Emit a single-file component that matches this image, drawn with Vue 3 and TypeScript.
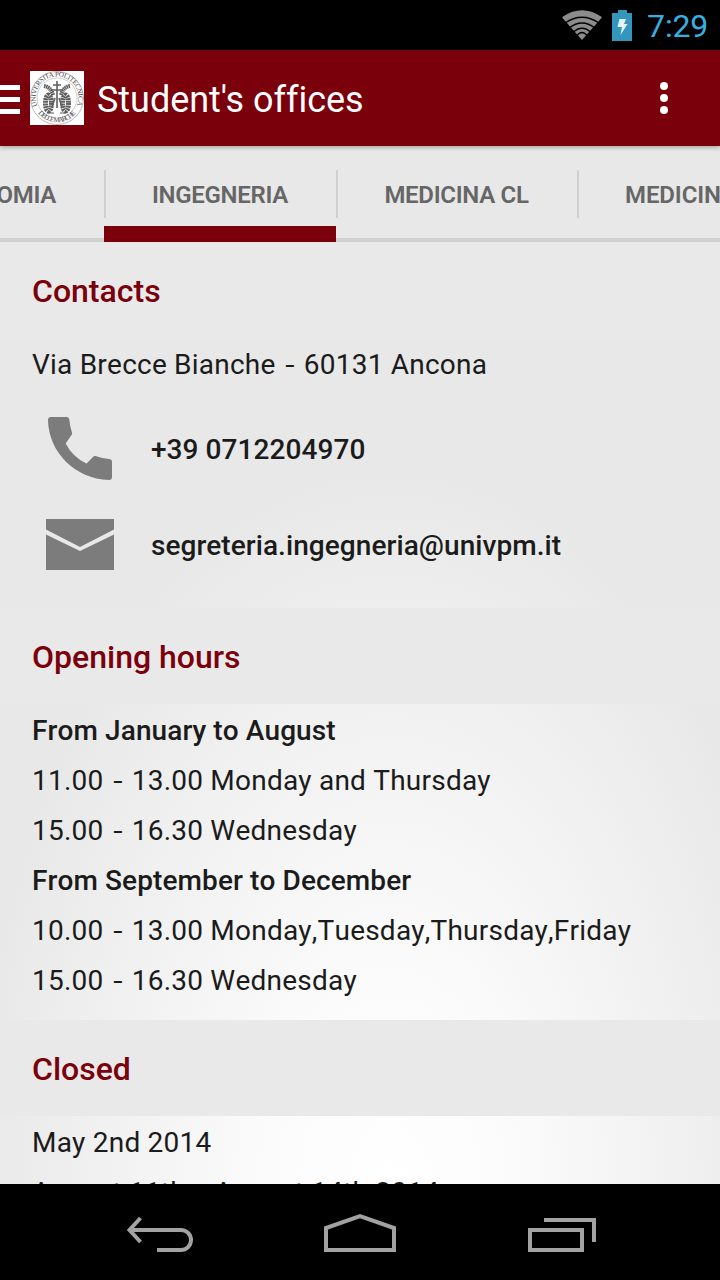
<script setup lang="ts">
interface Line {
  text: string;
  strong?: boolean;
}

const tabs = [
  { label: "ECONOMIA", key: "economia" },
  { label: "INGEGNERIA", key: "ingegneria", active: true },
  { label: "MEDICINA CL", key: "medicina-cl" },
  { label: "MEDICINA", key: "medicina" },
];

const address = "Via Brecce Bianche - 60131 Ancona";

const hours: Line[] = [
  { text: "From January to August", strong: true },
  { text: "11.00 - 13.00 Monday and Thursday" },
  { text: "15.00 - 16.30 Wednesday" },
  { text: "From September to December", strong: true },
  { text: "10.00 - 13.00 Monday,Tuesday,Thursday,Friday" },
  { text: "15.00 - 16.30 Wednesday" },
];

const closed = ["May 2nd 2014", "August 11th - August 14th 2014"];

// Keeps the hyphen as its own piece so it can be spaced like a dash.
function pieces(text: string): string[] {
  return text.split(/(-)/);
}
</script>

<template>
  <div class="screen">
    <div class="status-bar">
      <svg class="wifi" viewBox="0 0 40 32" fill="#8c8c8c">
        <path d="M20 31L0.500 9Q0 8 1 7.500Q20 -5 39 7.500Q40 8 39.500 9Z" />
        <g fill="none" stroke="#000" stroke-width="1.500">
          <path d="M3 14Q20 2.500 37 14" />
          <path d="M7 19Q20 9 33 19" />
          <path d="M11 23.500Q20 15 29 23.500" />
          <path d="M14.500 27Q20 20 25.500 27" />
        </g>
      </svg>
      <svg class="battery" viewBox="0 0 20 31">
        <path fill="#3596bd" d="M6 0h9v3h5v28H0V3h6z" />
        <path fill="#e4f4fb" d="M7.500 9h6.500l-2 5h3.500l-7 11 1.500-8H5.500z" />
      </svg>
      <span class="clock">7:29</span>
    </div>

    <header class="app-bar">
      <span class="drawer"><i /><i /><i /></span>
      <svg class="seal" viewBox="0 0 54 54">
        <defs>
          <path id="seal-top" d="M7.400 35 A21.300 21.300 0 1 1 46.600 35" />
          <path id="seal-bottom" d="M7.500 41.500 A24.500 24.500 0 0 0 46.500 41.500" />
        </defs>
        <rect width="54" height="54" fill="#fff" />
        <g fill="none" stroke="#8a8a8a">
          <circle cx="27" cy="27" r="26.500" stroke-width="0.600" />
          <circle cx="27" cy="27" r="20" stroke-width="0.400" />
        </g>
        <g class="seal-text">
          <text><textPath href="#seal-top" textLength="83">UNIVERSITA POLITECNICA</textPath></text>
          <text><textPath href="#seal-bottom" startOffset="1" textLength="43">DELLE MARCHE</textPath></text>
        </g>
        <g fill="none" stroke="#606060">
          <path d="M14 15q7 1 9 9M40 15q-7 1-9 9" stroke-width="4" stroke-dasharray="1.500 0.500" />
          <ellipse cx="18.500" cy="32" rx="3" ry="8" stroke-width="5" stroke-dasharray="2 0.600" />
          <ellipse cx="35.500" cy="32" rx="3" ry="8" stroke-width="5" stroke-dasharray="2 0.600" />
          <path d="M27 10v27M23 14h8M21 19h12M25 27l-3 9M29 27l3 9" stroke-width="1.600" />
          <path d="M18 42h6M30 42h6" stroke-width="1.200" />
        </g>
      </svg>
      <h1 class="title">Student's offices</h1>
      <span class="overflow"><i /><i /><i /></span>
    </header>

    <nav class="tabs">
      <div
        v-for="tab in tabs"
        :key="tab.key"
        class="tab"
        :class="[tab.key, { 'is-active': tab.active }]"
      >
        <span>{{ tab.label }}</span>
      </div>
    </nav>

    <main class="content">
      <h2 class="section-header">Contacts</h2>
      <section class="contacts">
        <p class="line address">
          <span v-for="(piece, i) in pieces(address)" :key="i" :class="{ dash: piece === '-' }">{{ piece }}</span>
        </p>
        <div class="contact-row">
          <svg class="phone" viewBox="0 0 64 64" fill="#7c7c7c">
            <path
              d="M3 0H19Q21 0 21.300 2.500Q21.800 9 24 15.500Q24.500 17 23.500 18L17.700 26.500Q24.500 40 38.500 46.500L45 40Q46 38.700 47.500 39Q54 41.500 61 42Q64 42.200 64 45V60Q64 63 61 63C27 62 0.500 35 0 3Q0 0 3 0Z"
            />
          </svg>
          <span class="contact-text">+39 0712204970</span>
        </div>
        <div class="contact-row">
          <svg class="mail" viewBox="0 0 68 51" fill="#7c7c7c">
            <path d="M0 0H68V10.500L34 28 0 10.500Z" />
            <path d="M0 15.500L34 32 68 15.500V51H0Z" />
          </svg>
          <span class="contact-text">segreteria.ingegneria@univpm.it</span>
        </div>
      </section>

      <h2 class="section-header">Opening hours</h2>
      <section class="hours">
        <p v-for="(line, index) in hours" :key="index" class="line" :class="{ strong: line.strong }">
          <span v-for="(piece, i) in pieces(line.text)" :key="i" :class="{ dash: piece === '-' }">{{ piece }}</span>
        </p>
      </section>

      <h2 class="section-header">Closed</h2>
      <section class="closed">
        <p v-for="day in closed" :key="day" class="line">
          <span v-for="(piece, i) in pieces(day)" :key="i" :class="{ dash: piece === '-' }">{{ piece }}</span>
        </p>
      </section>
    </main>

    <footer class="nav-bar">
      <svg viewBox="0 0 720 96" fill="none" stroke="#a2a2a2" stroke-width="4">
        <path d="M130 46h51a10 10 0 0 1 0 20h-24" />
        <path d="M140.500 34l-11 12 11 12" />
        <path d="M326 66V44l34-12 34 12v22z" />
        <path d="M530 46h52v20h-52zM544 36h50v22" />
      </svg>
    </footer>
  </div>
</template>

<style>
body {
  margin: 0;
  overflow: hidden;
}
</style>

<style scoped>
.screen {
  display: flex;
  flex-direction: column;
  width: 720px;
  height: 1280px;
  overflow: hidden;
  color: #1b1b1b;
  background: #e8e8e8;
  font-family: Roboto, "Liberation Sans", sans-serif;
}

.status-bar {
  display: flex;
  align-items: center;
  justify-content: flex-end;
  flex: 0 0 50px;
  box-sizing: border-box;
  padding-right: 12px;
  background: #000;
}

.wifi {
  width: 40px;
  height: 32px;
  margin-right: 10px;
}

.battery {
  width: 20px;
  height: 31px;
  margin-right: 15px;
}

.clock {
  padding-top: 2px;
  color: #35b0e0;
  font-size: 32px;
  font-weight: 400;
  letter-spacing: -0.2px;
}

.app-bar {
  position: relative;
  z-index: 1;
  display: flex;
  align-items: center;
  flex: 0 0 96px;
  background: #7a000b;
  box-shadow: 0 1px 5px rgba(0, 0, 0, 0.35);
}

.drawer {
  display: grid;
  gap: 7px;
  width: 20px;
  margin-right: 10px;
  padding-top: 3px;
}

.drawer i {
  height: 5px;
  background: #fff;
}

.seal {
  width: 54px;
  height: 54px;
}

.seal-text {
  fill: #444;
  font-family: "Liberation Serif", serif;
  font-size: 7px;
}

.title {
  flex: 1;
  margin: 0;
  padding: 4px 0 0 13px;
  color: #fff;
  font-size: 36px;
  font-weight: 400;
  letter-spacing: -0.04px;
}

.overflow {
  display: grid;
  gap: 4px;
  margin-right: 52px;
}

.overflow i {
  width: 8px;
  height: 8px;
  border-radius: 50%;
  background: #fff;
}

.tabs {
  display: flex;
  flex: 0 0 96px;
  box-sizing: border-box;
  background: linear-gradient(#d0d0d0, #d0d0d0) 0 92px / 100% 4px no-repeat;
}

.tab {
  display: flex;
  align-items: center;
  justify-content: center;
  flex: 0 0 auto;
  box-sizing: border-box;
  height: 96px;
  padding-top: 2px;
  color: #666;
  background: linear-gradient(#d0d0d0, #d0d0d0) 0 24px / 2px 48px no-repeat;
  font-size: 24px;
  font-weight: 600;
  letter-spacing: -0.3px;
  white-space: nowrap;
}

.tab.economia {
  justify-content: flex-end;
  width: 104px;
  padding-right: 48px;
  background: none;
}

.ingegneria {
  width: 232px;
}

.medicina-cl {
  width: 241px;
}

.tab.medicina {
  padding-right: 48px;
  padding-left: 48px;
  letter-spacing: -0.1px;
}

.tab.is-active {
  border-bottom: 16px solid #7a000b;
  padding-top: 18px;
}

.content {
  flex: 1;
  min-height: 0;
  overflow: hidden;
  background: radial-gradient(ellipse 420px 740px at 390px 960px, #fff 0%, #fbfbfb 30%, #f1f1f1 68%, #e8e8e8 100%);
}

.section-header {
  height: 96px;
  margin: 0;
  padding-left: 32px;
  background: #e9e9e9;
  color: #7a000b;
  font-size: 32px;
  font-weight: 500;
  line-height: 98px;
}

.contacts {
  box-sizing: border-box;
  height: 270px;
  padding-top: 2px;
}

.line {
  height: 50px;
  margin: 0;
  padding-left: 32px;
  font-size: 28px;
  font-kerning: none;
  letter-spacing: 0.22px;
  line-height: 50px;
  white-space: nowrap;
}

.line span {
  white-space: pre;
}

.line .dash {
  display: inline-block;
  width: 14px;
  text-align: center;
  transform: scaleX(1.2);
}

.strong {
  font-weight: 500;
  letter-spacing: 0.1px;
}

.contact-row {
  display: grid;
  grid-template-columns: 96px 1fr;
  align-items: center;
  height: 96px;
  padding-left: 32px;
  column-gap: 23px;
  font-size: 28px;
  font-weight: 500;
  letter-spacing: 0.07px;
}

.contact-text {
  padding-top: 3px;
}

.address {
  height: 60px;
}

.contact-row svg {
  justify-self: center;
}

.phone {
  width: 64px;
  height: 64px;
  padding-top: 1px;
}

.mail {
  width: 68px;
  height: 51px;
}

.hours {
  box-sizing: border-box;
  height: 316px;
  padding-top: 2px;
}

.closed {
  padding-top: 2px;
}

.nav-bar {
  flex: 0 0 96px;
  background: #000;
}

.nav-bar svg {
  display: block;
  width: 720px;
  height: 96px;
}
</style>
